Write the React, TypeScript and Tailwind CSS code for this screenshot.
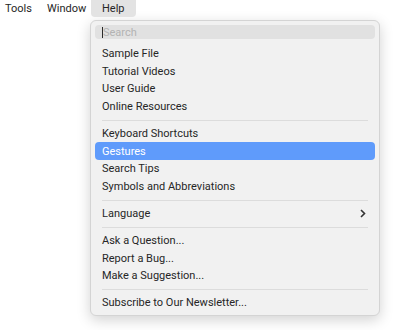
import React from "react";

type Item = { label: string; highlight?: boolean; submenu?: boolean } | "sep";

const items: Item[] = [
  { label: "Sample File" },
  { label: "Tutorial Videos" },
  { label: "User Guide" },
  { label: "Online Resources" },
  "sep",
  { label: "Keyboard Shortcuts" },
  { label: "Gestures", highlight: true },
  { label: "Search Tips" },
  { label: "Symbols and Abbreviations" },
  "sep",
  { label: "Language", submenu: true },
  "sep",
  { label: "Ask a Question..." },
  { label: "Report a Bug..." },
  { label: "Make a Suggestion..." },
  "sep",
  { label: "Subscribe to Our Newsletter..." },
];

export default function App() {
  return (
    <div
      className="w-[395px] h-[330px] bg-white text-[#262626] text-[11px] leading-none"
      style={{ fontFamily: "Roboto, 'Noto Sans', sans-serif" }}
    >
      <div className="flex h-[17px] items-center">
        <div className="pl-[5px] w-[47px]">Tools</div>
        <div className="w-[44px]">Window</div>
        <div className="w-[45px] h-[17px] flex items-center pl-[11px] bg-[#e3e3e3] rounded-b-[4px]">Help</div>
      </div>
      <div className="ml-[90px] mt-[3px] w-[290px] rounded-[6px] border border-[#d4d4d4] bg-[#f1f1f1] shadow-[0_4px_14px_rgba(0,0,0,0.18)] px-[4px] pt-[4px] pb-[3px]">
        <div className="h-[14px] rounded-[4px] bg-[#e1e1e1] flex items-center pl-[7px] pt-[1px]">
          <div className="w-[1px] h-[11px] bg-[#2a2a2a]" />
          <span className="text-[#b3b3b3]">Search</span>
        </div>
        <div className="h-[6px]" />
        {items.map((it, i) =>
          it === "sep" ? (
            <div key={i} className="h-[9.5px] flex items-center px-[7px]">
              <div className="h-[1px] w-full bg-[#dcdcdc]" />
            </div>
          ) : (
            <div
              key={i}
              className={
                "h-[17.6px] flex items-center justify-between pl-[7px] pr-[9px] rounded-[4px] " +
                (it.highlight ? "bg-[#5f9bfb] text-white" : "")
              }
            >
              <span>{it.label}</span>
              {it.submenu && (
                <svg width="6" height="9" viewBox="0 0 6 9" fill="none">
                  <path d="M1 1l3.5 3.5L1 8" stroke="#333" strokeWidth="1.6" />
                </svg>
              )}
            </div>
          )
        )}
      </div>
    </div>
  );
}
